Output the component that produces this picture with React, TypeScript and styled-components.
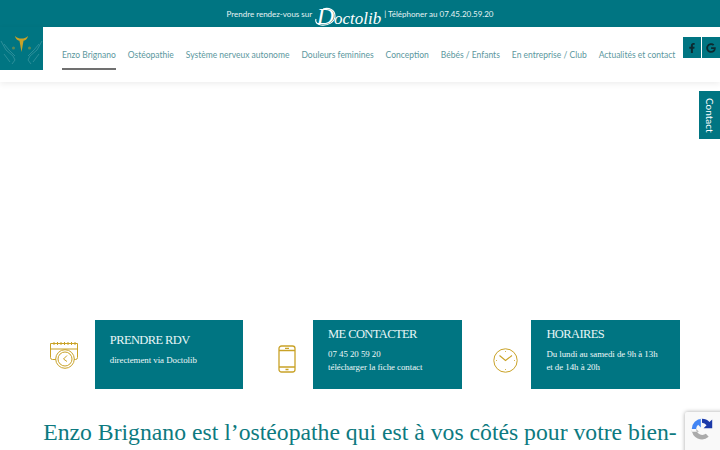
import { createGlobalStyle } from "styled-components";
import styled from "styled-components";
import { FaFacebookF, FaGoogle } from "react-icons/fa";

const TEAL = "#007582";
const GOLD = "#c9a227";

const GlobalStyle = createGlobalStyle`
  html,
  body {
    margin: 0;
    height: 450px;
    overflow: hidden;
    background: #fff;
    font-family: Lato, "Liberation Sans", sans-serif;
  }
`;

const TopBar = styled.div`
  height: 27px;
  background: ${TEAL};
  color: #e6f3f4;
  font-size: 8px;
  display: flex;
  align-items: center;
  justify-content: center;
  gap: 3px;
`;

const LogoWord = styled.span`
  position: relative;
  display: block;
  width: 66px;
  height: 27px;
  color: #fff;
  font-family: "Liberation Serif", serif;
  font-style: italic;
  font-size: 17px;
  line-height: 32px;
  text-align: right;
  white-space: nowrap;

  &::first-letter {
    font-size: 24px;
  }

  svg {
    position: absolute;
    left: 0;
    top: 7px;
  }
`;

const Header = styled.header`
  height: 55px;
  display: flex;
  background: #fff;
  box-shadow: 0 2px 6px rgba(0, 0, 0, 0.07);
`;

const LogoBox = styled.div`
  width: 43px;
  height: 43px;
  flex: none;
  background: ${TEAL};
  display: flex;
  align-items: center;
  justify-content: center;
`;

const Nav = styled.nav`
  display: flex;
  gap: 12px;
  margin-left: 19px;
  height: 43px;
`;

const NavItem = styled.a<{ $active?: boolean }>`
  display: flex;
  align-items: center;
  height: 100%;
  white-space: nowrap;
  font-size: 8.5px;
  color: #5b979e;
  border-bottom: 2px solid ${(p) => (p.$active ? "#707070" : "transparent")};
  padding-top: 14px;
  box-sizing: border-box;
`;

const Social = styled.div`
  display: flex;
  gap: 1.5px;
  margin-left: auto;
  padding-top: 10px;
`;

const SocialButton = styled.a`
  width: 18px;
  height: 21px;
  background: ${TEAL};
  color: #0c2a30;
  font-size: 10px;
  display: flex;
  align-items: center;
  justify-content: center;
`;

const Hero = styled.div`
  height: 238px;
`;

const Cards = styled.section`
  display: grid;
  grid-template-columns: repeat(3, 218.3px);
  padding-left: 25px;
`;

const CardCol = styled.div`
  display: flex;
  justify-content: flex-end;
  align-items: center;
`;

const IconSlot = styled.div<{ $gap: number; $top: number }>`
  display: flex;
  padding-right: ${(p) => p.$gap}px;
  padding-top: ${(p) => p.$top}px;
`;

const Card = styled.div<{ $pad: number }>`
  width: 148.5px;
  height: 68.5px;
  flex: none;
  background: ${TEAL};
  color: #fff;
  box-sizing: border-box;
  padding: ${(p) => p.$pad}px 8px 0 15px;
  font-family: "Liberation Serif", serif;
`;

const CardTitle = styled.div`
  font-size: 12.5px;
  line-height: 16px;
  letter-spacing: -0.6px;
  color: #e8f6f7;
`;

const CardText = styled.div`
  margin-top: 6px;
  font-size: 8.9px;
  line-height: 13px;
  letter-spacing: -0.05px;
  color: #eef7f8;
`;

const Title = styled.h1`
  margin: 29px 40px 0;
  font-family: "Liberation Serif", serif;
  font-weight: 400;
  font-size: 23.7px;
  line-height: 29px;
  text-align: center;
  color: #0d7a80;
`;

const ContactTab = styled.a`
  position: fixed;
  top: 91px;
  right: 0;
  width: 21px;
  height: 48px;
  background: ${TEAL};
  color: #fff;
  font-size: 10px;
  display: flex;
  align-items: center;
  justify-content: center;
  writing-mode: vertical-rl;
`;

const Recaptcha = styled.div`
  position: fixed;
  left: 685px;
  top: 412px;
  width: 60px;
  height: 60px;
  background: #f9f9f9;
  border-radius: 2px;
  box-shadow: 0 0 4px rgba(0, 0, 0, 0.35);
  padding: 6px 0 0 6px;
  box-sizing: border-box;
`;

function Swash() {
  return (
    <svg width="22" height="20" viewBox="0 0 22 20" fill="none" stroke="#fff" strokeWidth="1.1">
      <path d="M8 2c6-2 12 1 12 7 0 6-7 10-14 9-4-.5-6-3-5-6" />
    </svg>
  );
}

function Hands() {
  return (
    <svg width="43" height="32" viewBox="0 0 43 32" fill="none">
      <path d="M15 3c2 2 4 2.500 6.500 2.500S26 5 28 3c-.5 3-3 5-6.500 5S15.500 6 15 3z" fill={GOLD} />
      <path d="M19.500 8h4l-2 11z" fill={GOLD} />
      <path d="M1 8l5 9 7 6 2 4-3 4M4 21l6 8M4 11l5 6 6 6" stroke="#3f9aa3" strokeWidth="0.7" />
      <path d="M42 8l-5 9-7 6-2 4 3 4M39 21l-6 8M39 11l-5 6-6 6" stroke="#3f9aa3" strokeWidth="0.7" />
      <circle cx="13.500" cy="15" r="1.500" fill={GOLD} opacity="0.45" />
      <circle cx="29.500" cy="15" r="1.500" fill={GOLD} opacity="0.45" />
    </svg>
  );
}

function CalendarIcon() {
  return (
    <svg width="28" height="28" viewBox="0 0 28 28" fill="none" stroke={GOLD} strokeWidth="1">
      <path d="M6 18.500H2.500a2 2 0 0 1-2-2V2.500h27v14a2 2 0 0 1-2 2H24" />
      <path d="M.5 8h27" />
      <path d="M4 1v3M7.500 1v3M11 1v3M14.500 1v3M18 1v3M21.500 1v3M25 1v3" />
      <circle cx="15" cy="18" r="9.300" fill="#fff" />
      <circle cx="15" cy="18" r="7" />
      <path d="M17 14.500L13.500 18l3.500 2.500" />
    </svg>
  );
}

function PhoneIcon() {
  return (
    <svg width="18" height="28" viewBox="0 0 18 28" fill="none" stroke={GOLD} strokeWidth="1.3">
      <rect x="1" y="1" width="16" height="26" rx="2.500" />
      <path d="M1 5.500h16M1 22h16M7 3.300h4M7.500 24.500h3" />
    </svg>
  );
}

function ClockIcon() {
  return (
    <svg width="25" height="25" viewBox="0 0 25 25" fill="none" stroke={GOLD}>
      <circle cx="12.500" cy="12.500" r="11.700" strokeWidth="1" />
      <path d="M6.500 7.500l6 5 6.500-5" strokeWidth="1.100" />
      <path d="M12.500 3v1M12.500 21v1M3 12.500h1M21 12.500h1" strokeWidth="0.8" />
    </svg>
  );
}

function RecaptchaIcon() {
  return (
    <svg width="22" height="22" viewBox="0 0 28 28" fill="none">
      <path d="M14 1a13 13 0 0 1 9.500 4.200L27 2v11H16l3.800-3.800A8.500 8.500 0 0 0 14 6z" fill="#1c3aa9" />
      <path d="M14 1A13 13 0 0 0 1 14h5.500a8 8 0 0 1 2.500-5.500l3.500 3.500V1z" fill="#4285f4" />
      <path d="M1 14a13 13 0 0 0 21.500 10l-3.500-4a8 8 0 0 1-12.500-6l3.500 3.500H1z" fill="#ababab" />
    </svg>
  );
}

const navLinks = [
  "Enzo Brignano",
  "Ostéopathie",
  "Système nerveux autonome",
  "Douleurs feminines",
  "Conception",
  "Bébés / Enfants",
  "En entreprise / Club",
  "Actualités et contact",
];

export default function App() {
  return (
    <>
      <GlobalStyle />
      <TopBar>
        <span>Prendre rendez-vous sur</span>
        <LogoWord>
          Doctolib
          <Swash />
        </LogoWord>
        <span>| Téléphoner au 07.45.20.59.20</span>
      </TopBar>
      <Header>
        <LogoBox>
          <Hands />
        </LogoBox>
        <Nav>
          {navLinks.map((label, i) => (
            <NavItem key={label} $active={i === 0}>
              {label}
            </NavItem>
          ))}
        </Nav>
        <Social>
          <SocialButton>
            <FaFacebookF />
          </SocialButton>
          <SocialButton>
            <FaGoogle />
          </SocialButton>
        </Social>
      </Header>
      <Hero />
      <Cards>
        <CardCol>
          <IconSlot $gap={17} $top={1}>
            <CalendarIcon />
          </IconSlot>
          <Card $pad={12}>
            <CardTitle>PRENDRE RDV</CardTitle>
            <CardText>directement via Doctolib</CardText>
          </Card>
        </CardCol>
        <CardCol>
          <IconSlot $gap={17} $top={10}>
            <PhoneIcon />
          </IconSlot>
          <Card $pad={6}>
            <CardTitle>ME CONTACTER</CardTitle>
            <CardText>
              07 45 20 59 20
              <br />
              télécharger la fiche contact
            </CardText>
          </Card>
        </CardCol>
        <CardCol>
          <IconSlot $gap={13} $top={12}>
            <ClockIcon />
          </IconSlot>
          <Card $pad={6}>
            <CardTitle>HORAIRES</CardTitle>
            <CardText>
              Du lundi au samedi de 9h à 13h
              <br />
              et de 14h à 20h
            </CardText>
          </Card>
        </CardCol>
      </Cards>
      <Title>Enzo Brignano est l’ostéopathe qui est à vos côtés pour votre bien-être à Hyères !</Title>
      <ContactTab>Contact</ContactTab>
      <Recaptcha>
        <RecaptchaIcon />
      </Recaptcha>
    </>
  );
}
